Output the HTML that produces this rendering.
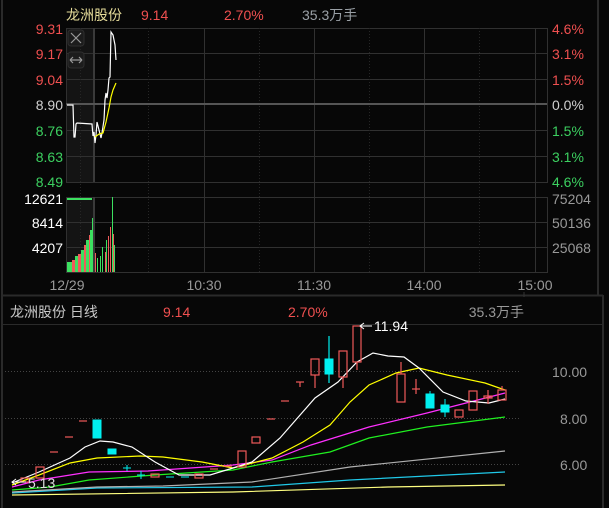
<!DOCTYPE html>
<html><head><meta charset="utf-8"><style>
html,body{margin:0;padding:0;background:#070707;width:609px;height:508px;overflow:hidden}
svg{display:block}
text{font-family:"Liberation Sans","Noto Sans CJK SC",sans-serif}
</style></head><body>
<svg width="609" height="508" viewBox="0 0 609 508">
<rect width="609" height="508" fill="#070707"/>
<!-- borders -->
<line x1="2" y1="0" x2="2" y2="508" stroke="#2a2a2a" stroke-width="2"/>
<line x1="598" y1="0" x2="598" y2="295" stroke="#2a2a2a" stroke-width="2"/>
<line x1="603" y1="295" x2="603" y2="508" stroke="#2a2a2a" stroke-width="2"/>
<line x1="2" y1="295.5" x2="603" y2="295.5" stroke="#2a2a2a" stroke-width="2"/>
<line x1="524" y1="292" x2="524" y2="297" stroke="#333"/>
<!-- top header -->
<text x="66" y="20" font-size="14" fill="#e6dc9a">龙洲股份</text>
<text x="141" y="20" font-size="14" fill="#f05050">9.14</text>
<text x="224" y="20" font-size="14" fill="#f05050">2.70%</text>
<text x="302" y="20" font-size="14" fill="#9aa0a6">35.3万手</text>
<!-- top chart frame -->
<rect x="66" y="28" width="28" height="154" fill="#141414"/>
<rect x="66" y="197" width="28" height="75" fill="#141414"/>
<g stroke="#303030" stroke-width="1" fill="none">
<rect x="66.5" y="28.5" width="481" height="154"/>
<line x1="66" y1="53.5" x2="547" y2="53.5"/>
<line x1="66" y1="79.5" x2="547" y2="79.5"/>
<line x1="66" y1="130.5" x2="547" y2="130.5"/>
<line x1="66" y1="156.5" x2="547" y2="156.5"/>
<rect x="66.5" y="197.5" width="481" height="75"/>
<line x1="66" y1="222.5" x2="547" y2="222.5"/>
<line x1="66" y1="247.5" x2="547" y2="247.5"/>
<line x1="204.5" y1="28" x2="204.5" y2="272"/>
<line x1="314.5" y1="28" x2="314.5" y2="272"/>
<line x1="424.5" y1="28" x2="424.5" y2="272"/>
<line x1="535.5" y1="28" x2="535.5" y2="272"/>
</g>
<g stroke="#3a3a3a" stroke-width="2"><line x1="94" y1="28" x2="94" y2="182"/><line x1="94" y1="197" x2="94" y2="272"/></g>
<g stroke="#262626" stroke-dasharray="1,2"><line x1="80.5" y1="28" x2="80.5" y2="272"/><line x1="148.5" y1="28" x2="148.5" y2="272"/><line x1="259.5" y1="28" x2="259.5" y2="272"/><line x1="369.5" y1="28" x2="369.5" y2="272"/><line x1="479.5" y1="28" x2="479.5" y2="272"/></g>
<line x1="66" y1="104" x2="547" y2="104" stroke="#555" stroke-width="2"/>
<!-- icons -->
<rect x="68" y="30" width="16" height="16" rx="3" fill="#1c1c1c" stroke="#2e2e2e"/>
<path d="M71 33 L81 43 M81 33 L71 43" stroke="#999" stroke-width="1.2"/>
<rect x="68" y="52" width="16" height="16" rx="3" fill="#1c1c1c" stroke="#2e2e2e"/>
<path d="M70 60 H82 M70 60 L73 57 M70 60 L73 63 M82 60 L79 57 M82 60 L79 63" stroke="#999" stroke-width="1.2" fill="none"/>
<!-- price labels -->
<g font-size="14" text-anchor="end">
<text x="63" y="34" fill="#f05050">9.31</text>
<text x="63" y="59" fill="#f05050">9.17</text>
<text x="63" y="85" fill="#f05050">9.04</text>
<text x="63" y="110" fill="#d0d0d0">8.90</text>
<text x="63" y="136" fill="#3cd060">8.76</text>
<text x="63" y="162" fill="#3cd060">8.63</text>
<text x="63" y="187" fill="#3cd060">8.49</text>
<text x="63" y="204" fill="#fff">12621</text>
<text x="63" y="228" fill="#fff">8414</text>
<text x="63" y="253" fill="#fff">4207</text>
</g>
<g font-size="14">
<text x="552" y="34" fill="#f05050">4.6%</text>
<text x="552" y="59" fill="#f05050">3.1%</text>
<text x="552" y="85" fill="#f05050">1.5%</text>
<text x="552" y="110" fill="#d0d0d0">0.0%</text>
<text x="552" y="136" fill="#3cd060">1.5%</text>
<text x="552" y="162" fill="#3cd060">3.1%</text>
<text x="552" y="187" fill="#3cd060">4.6%</text>
<text x="552" y="204" fill="#999">75204</text>
<text x="552" y="228" fill="#999">50136</text>
<text x="552" y="253" fill="#999">25068</text>
</g>
<g font-size="14" fill="#999" text-anchor="middle">
<text x="67" y="290">12/29</text><text x="204" y="290">10:30</text><text x="314" y="290">11:30</text><text x="424" y="290">14:00</text><text x="535" y="290">15:00</text>
</g>
<!-- intraday lines -->
<polyline fill="none" stroke="#fff" stroke-width="1.2" points="67,105 73,105 74,137 75,137 76,124 77,123 92,124 93,136 94,132 95,143 96,135 97,122 99,130 101,138 102,133 104,120 105,100 106,93 107,98 108,90 109,78 110,77 111,32 113,35 114,40 115,45 116,60"/>
<polyline fill="none" stroke="#ffff00" stroke-width="1.2" points="95,137 99,134 103,133 106,122 109,108 111,97 113,90 116,83"/>
<!-- volume -->
<g fill="#3ce060">
<rect x="67" y="198" width="25" height="2"/>
<rect x="67" y="262" width="5" height="10"/><rect x="75" y="256" width="3" height="16"/><rect x="81" y="250" width="3" height="22"/><rect x="86" y="240" width="3" height="32"/><rect x="90" y="230" width="2" height="42"/><rect x="92" y="218" width="1" height="54"/>
<rect x="97" y="258" width="1" height="14"/><rect x="100" y="256" width="1" height="16"/><rect x="102" y="247" width="1" height="25"/><rect x="106" y="240" width="1" height="32"/><rect x="110" y="236" width="1" height="36"/><rect x="112" y="197" width="1" height="75"/><rect x="114" y="245" width="1" height="27"/>
</g>
<g fill="#f05a5a">
<rect x="72" y="260" width="3" height="12"/><rect x="78" y="254" width="3" height="18"/><rect x="84" y="245" width="2" height="27"/><rect x="89" y="235" width="1" height="37"/><rect x="95" y="253" width="1" height="19"/><rect x="105" y="252" width="1" height="20"/><rect x="108" y="236" width="1" height="36"/><rect x="110" y="227" width="1" height="45"/><rect x="113" y="234" width="1" height="38"/>
</g>
<!-- bottom header -->
<text x="10" y="317" font-size="14" fill="#c8c8c8">龙洲股份 日线</text>
<text x="163" y="317" font-size="14" fill="#f05050">9.14</text>
<text x="288" y="317" font-size="14" fill="#f05050">2.70%</text>
<text x="524" y="317" font-size="14" fill="#999" text-anchor="end">35.3万手</text>
<line x1="2" y1="324.5" x2="603" y2="324.5" stroke="#2a2a2a"/>
<g stroke="#444" stroke-dasharray="1,2"><line x1="5" y1="371.5" x2="520" y2="371.5"/><line x1="5" y1="418.5" x2="520" y2="418.5"/><line x1="5" y1="464.5" x2="520" y2="464.5"/></g>
<g font-size="14" fill="#999"><text x="552" y="377">10.00</text><text x="560" y="424">8.00</text><text x="560" y="470">6.00</text></g>
<!-- MAs -->
<g fill="none" stroke-width="1.2">
<polyline stroke="#ffff80" points="12,495 233,492 388,487 505,485"/>
<polyline stroke="#20c8e8" points="12,493 97,488 252,487 350,480 505,472"/>
<polyline stroke="#b0b0b0" points="12,492 97,487 163,486 252,482 350,467 505,451"/>
<polyline stroke="#20f020" points="12,490 50,487 89,480 155,475 233,470 272,462 330,452 369,438 427,427 505,417"/>
<polyline stroke="#ff30ff" points="12,487 39,480 89,472 148,471 233,465 272,460 311,445 369,427 427,413 505,393"/>
<polyline stroke="#ffff00" points="12,485 39,475 70,463 97,458 140,456 163,457 202,462 233,468 272,458 303,442 330,425 350,402 369,385 396,373 419,368 447,375 485,383 505,390"/>
<polyline stroke="#ffffff" points="12,483 39,472 70,458 85,447 100,441 113,442 132,447 155,462 179,475 210,475 233,468 252,462 280,438 315,398 338,382 357,362 373,353 388,356 404,357 419,368 443,392 466,401 489,403 505,399"/>
</g>
<!-- candles -->
<g stroke="#f05a5a" fill="none" stroke-width="1.2">
<rect x="21" y="478" width="8" height="4"/><rect x="36" y="467" width="8" height="11"/>
<line x1="50" y1="452" x2="58" y2="452"/><line x1="65" y1="437" x2="73" y2="437"/><line x1="79" y1="421" x2="87" y2="421"/>
<rect x="151" y="474" width="8" height="3"/><rect x="195" y="474" width="8" height="4"/>
<line x1="210" y1="469" x2="218" y2="469"/><line x1="224" y1="466" x2="232" y2="466"/>
<rect x="238" y="451" width="8" height="16"/><rect x="252" y="437" width="8" height="6"/>
<line x1="267" y1="419" x2="275" y2="419"/><line x1="281" y1="401" x2="289" y2="401"/>
<line x1="296" y1="382" x2="304" y2="382"/><line x1="300" y1="382" x2="300" y2="387"/>
<rect x="311" y="359" width="8" height="16"/><line x1="315" y1="375" x2="315" y2="388"/>
<rect x="339" y="351" width="8" height="26"/><line x1="343" y1="377" x2="343" y2="388"/>
<rect x="353" y="326" width="8" height="36"/><line x1="357" y1="362" x2="357" y2="370"/>
<rect x="397" y="374" width="8" height="28"/><line x1="401" y1="362" x2="401" y2="374"/>
<line x1="412" y1="389" x2="420" y2="389"/><line x1="416" y1="379" x2="416" y2="394"/>
<rect x="455" y="410" width="8" height="7"/><rect x="469" y="391" width="8" height="19"/>
<rect x="484" y="396" width="8" height="2"/><line x1="488" y1="390" x2="488" y2="404"/>
<rect x="498" y="390" width="8" height="10"/><line x1="502" y1="386" x2="502" y2="390"/>
</g>
<g fill="#00f0f0" stroke="#00f0f0">
<rect x="93" y="420" width="8" height="18"/><rect x="108" y="449" width="8" height="5"/>
<line x1="123" y1="468" x2="131" y2="468"/><line x1="127" y1="465" x2="127" y2="471"/>
<line x1="137" y1="475" x2="145" y2="475"/><line x1="141" y1="471" x2="141" y2="479"/>
<line x1="166" y1="477" x2="174" y2="477"/><line x1="181" y1="477" x2="189" y2="477"/>
<rect x="325" y="359" width="8" height="15"/><line x1="329" y1="336" x2="329" y2="383" stroke-width="1.2"/>
<rect x="426" y="394" width="8" height="14"/><line x1="430" y1="391" x2="430" y2="408"/>
<rect x="441" y="405" width="8" height="7"/><line x1="445" y1="399" x2="445" y2="417"/>
</g>
<!-- annotations -->
<path d="M372 326 H360 M364 323 L360 326 L364 329" stroke="#fff" fill="none"/>
<text x="374" y="331" font-size="14" fill="#fff">11.94</text>
<path d="M26 482 H12 M16 479 L12 482 L16 485" stroke="#fff" fill="none"/>
<text x="28" y="488" font-size="14" fill="#ddd">5.13</text>
</svg>
</body></html>
